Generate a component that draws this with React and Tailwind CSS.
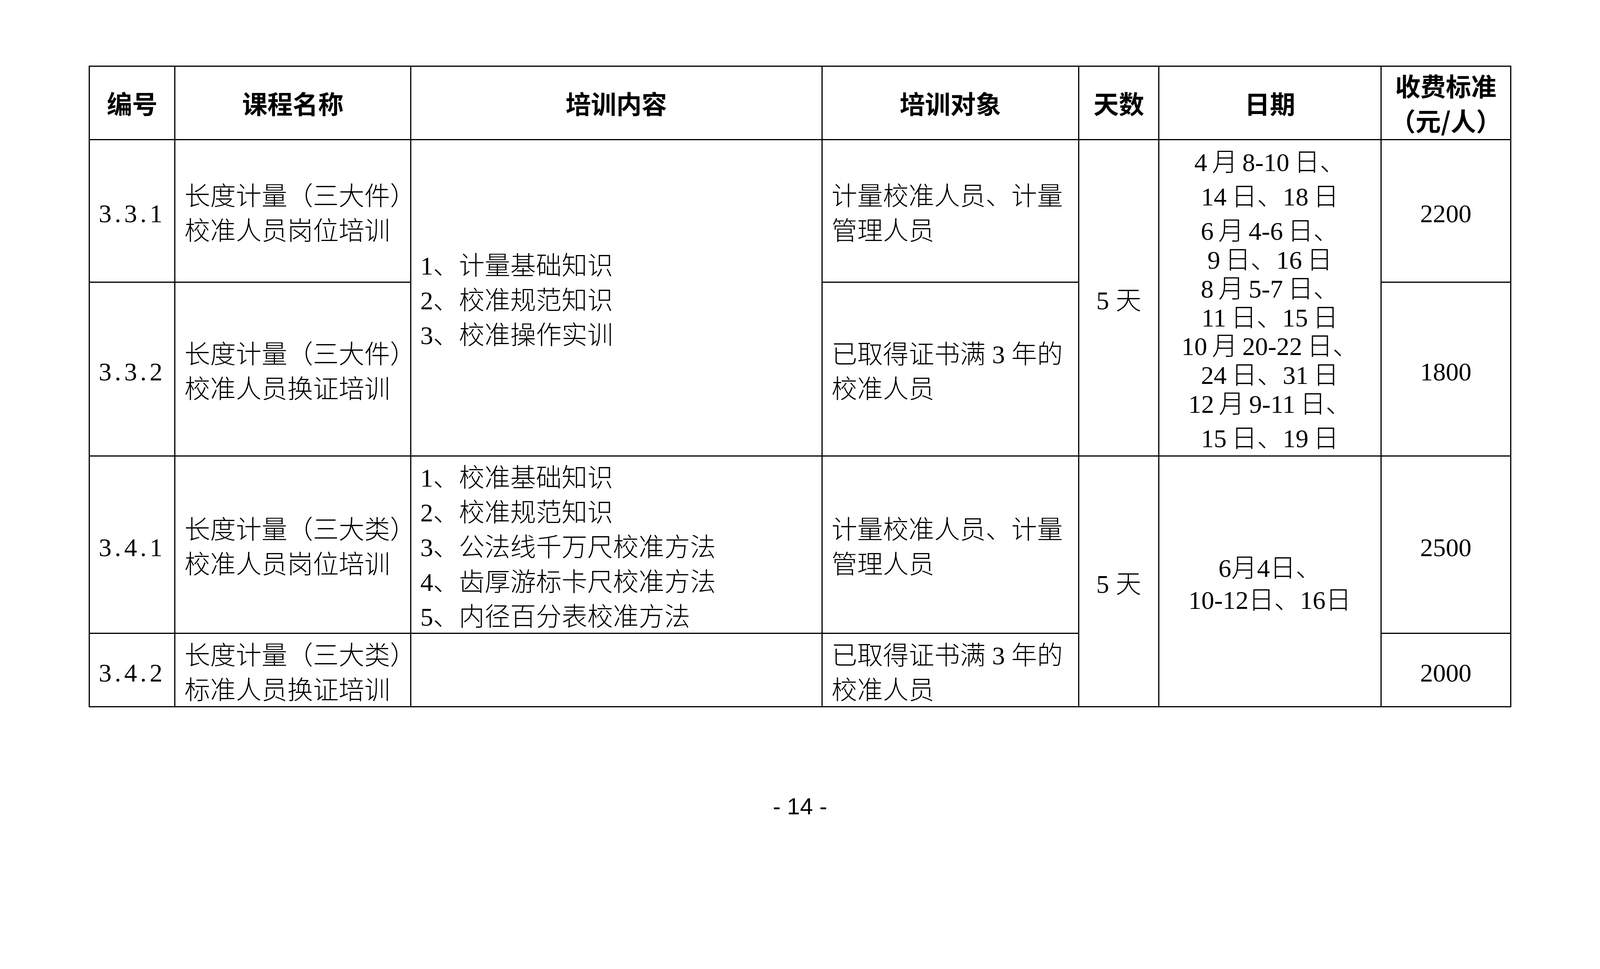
const cell = "border-[4px] border-black align-middle p-0";
const head =
  "font-['Noto_Sans_CJK_SC',sans-serif] font-bold text-[73px] leading-[100px] text-black text-center";
const body =
  "font-['Liberation_Serif','Noto_Sans_CJK_SC',serif] font-light text-[74px] leading-[100px] text-black";

function Lines({ items }) {
  return items.map((t, i) => (
    <div key={i} className="h-[100px] pt-[18px] flex items-center whitespace-nowrap">
      {t}
    </div>
  ));
}

function Id({ children }) {
  return (
    <td className={`${cell} ${body} pt-[18px] text-center`}>
      <span className="tracking-[0.12em] whitespace-nowrap">{children}</span>
    </td>
  );
}

function Left({ items, rowSpan }) {
  return (
    <td rowSpan={rowSpan} className={`${cell} ${body} pl-[26px]`}>
      <Lines items={items} />
    </td>
  );
}

function Center({ children, rowSpan }) {
  return (
    <td rowSpan={rowSpan} className={`${cell} ${body} pt-[18px] text-center whitespace-nowrap`}>
      {children}
    </td>
  );
}

const dates = [
  ["4 月 8-10 日、", ""],
  ["14 日、18 日", "mt-[16px]"],
  ["6 月 4-6 日、", "mt-[16px]"],
  ["9 日、16 日", ""],
  ["8 月 5-7 日、", ""],
  ["11 日、15 日", ""],
  ["10 月 20-22 日、", ""],
  ["24 日、31 日", ""],
  ["12 月 9-11 日、", ""],
  ["15 日、19 日", "mt-[16px]"],
];

export default function App() {
  // the page is drawn in 4607px units; fit it to whatever width the window really has
  const fit = typeof window !== "undefined" ? window.innerWidth / 4607 : 1;

  return (
    <div className="overflow-hidden">
      <div
        style={{ zoom: fit }}
        className="w-[4607px] h-[2481px] bg-white flex flex-col items-center pt-[189px]"
      >
        <table className="table-fixed border-collapse w-[4092px] border-[4px] border-black">
          <colgroup>
            <col className="w-[246px]" />
            <col className="w-[679px]" />
            <col className="w-[1184px]" />
            <col className="w-[740px]" />
            <col className="w-[230px]" />
            <col className="w-[640px]" />
            <col className="w-[373px]" />
          </colgroup>
          <tbody>
            <tr className="h-[211px]">
              <td className={`${cell} ${head}`}>编号</td>
              <td className={`${cell} ${head}`}>课程名称</td>
              <td className={`${cell} ${head}`}>培训内容</td>
              <td className={`${cell} ${head}`}>培训对象</td>
              <td className={`${cell} ${head}`}>天数</td>
              <td className={`${cell} ${head}`}>日期</td>
              <td className={`${cell} ${head}`}>
                <div>收费标准</div>
                <div>（元/人）</div>
              </td>
            </tr>

            <tr className="h-[411px]">
              <Id>3.3.1</Id>
              <Left items={["长度计量（三大件）", "校准人员岗位培训"]} />
              <Left rowSpan={2} items={["1、计量基础知识", "2、校准规范知识", "3、校准操作实训"]} />
              <Left items={["计量校准人员、计量", "管理人员"]} />
              <Center rowSpan={2}>5 天</Center>
              <td rowSpan={2} className={`${cell} ${body} [word-spacing:-5px]`}>
                {dates.map(([t, m], i) => (
                  <div
                    key={i}
                    className={`h-[83px] pt-[18px] flex items-center justify-center whitespace-nowrap ${m}`}
                  >
                    {t}
                  </div>
                ))}
              </td>
              <Center>2200</Center>
            </tr>

            <tr className="h-[500px]">
              <Id>3.3.2</Id>
              <Left items={["长度计量（三大件）", "校准人员换证培训"]} />
              <Left items={["已取得证书满 3 年的", "校准人员"]} />
              <Center>1800</Center>
            </tr>

            <tr className="h-[511px]">
              <Id>3.4.1</Id>
              <Left items={["长度计量（三大类）", "校准人员岗位培训"]} />
              <Left
                items={[
                  "1、校准基础知识",
                  "2、校准规范知识",
                  "3、公法线千万尺校准方法",
                  "4、齿厚游标卡尺校准方法",
                  "5、内径百分表校准方法",
                ]}
              />
              <Left items={["计量校准人员、计量", "管理人员"]} />
              <Center rowSpan={2}>5 天</Center>
              <td rowSpan={2} className={`${cell} ${body}`}>
                <div className="h-[93px] pt-[18px] flex items-center justify-center whitespace-nowrap">
                  6月4日、
                </div>
                <div className="h-[93px] pt-[18px] flex items-center justify-center whitespace-nowrap">
                  10-12日、16日
                </div>
              </td>
              <Center>2500</Center>
            </tr>

            <tr className="h-[212px]">
              <Id>3.4.2</Id>
              <Left items={["长度计量（三大类）", "标准人员换证培训"]} />
              <td className={cell}></td>
              <Left items={["已取得证书满 3 年的", "校准人员"]} />
              <Center>2000</Center>
            </tr>
          </tbody>
        </table>

        <div className="mt-[251px] font-['Liberation_Sans',sans-serif] text-[67px] leading-[67px] text-black whitespace-pre">
          - 14 -
        </div>
      </div>
    </div>
  );
}
